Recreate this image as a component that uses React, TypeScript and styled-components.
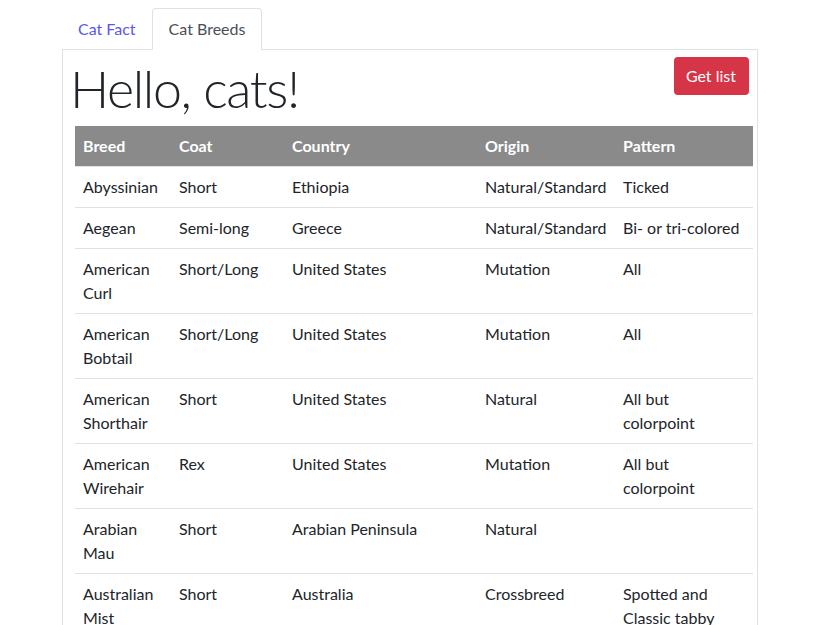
import React from "react";
import styled, { createGlobalStyle } from "styled-components";

const Global = createGlobalStyle`
  html, body { margin: 0; padding: 0; background: #fff; }
  body {
    font-family: "Lato", "Noto Sans", sans-serif;
    font-size: 16px;
    line-height: 24px;
    color: #212529;
  }
`;

const Page = styled.div`
  width: 696px;
  margin: 8px 0 0 62px;
`;

const Tabs = styled.ul`
  display: flex;
  list-style: none;
  margin: 0;
  padding: 0;
  border-bottom: 1px solid #dee2e6;
`;

const Tab = styled.li<{ $active?: boolean }>`
  margin-bottom: -1px;
  padding: 8px 15px;
  height: 24px;
  border: 1px solid ${(p) => (p.$active ? "#dee2e6" : "transparent")};
  border-bottom-color: ${(p) => (p.$active ? "#fff" : "transparent")};
  border-radius: 4px 4px 0 0;
  background: ${(p) => (p.$active ? "#fff" : "transparent")};
  color: ${(p) => (p.$active ? "#495057" : "#5a57ee")};
  cursor: pointer;
  &:last-child { padding: 8px 16px 8px 16px; }
`;

const Panel = styled.div`
  border: 1px solid #dee2e6;
  border-top: none;
  padding: 0 8px 0 12px;
`;

const HeadRow = styled.div`
  display: flex;
  justify-content: space-between;
  align-items: flex-start;
  height: 76px;
`;

const Title = styled.h1`
  margin: 0 0 0 -5px;
  font-family: "Lato", sans-serif;
  font-weight: 300;
  font-size: 52px;
  letter-spacing: -1.4px;
  line-height: 76px;
  color: #212529;
`;

const Button = styled.button`
  margin-top: 7px;
  background: #d63447;
  color: #fff;
  border: none;
  border-radius: 4px;
  font-family: inherit;
  font-size: 16px;
  line-height: 24px;
  padding: 7px 13px 7px 12px;
`;

const Table = styled.table`
  width: 678px;
  border-collapse: collapse;
  table-layout: fixed;
`;

const Th = styled.th`
  background: #8a8a8a;
  color: #fff;
  font-weight: 700;
  text-align: left;
  padding: 8px;
  vertical-align: top;
`;

const Td = styled.td`
  padding: 8px;
  vertical-align: top;
  border-top: 1px solid #dee2e6;
  &:last-child { padding-right: 12px; }
`;

const cols = [
  { name: "Breed", width: 96 },
  { name: "Coat", width: 113 },
  { name: "Country", width: 193 },
  { name: "Origin", width: 138 },
  { name: "Pattern", width: 138 },
];

const rows = [
  ["Abyssinian", "Short", "Ethiopia", "Natural/Standard", "Ticked"],
  ["Aegean", "Semi-long", "Greece", "Natural/Standard", "Bi- or tri-colored"],
  ["American Curl", "Short/Long", "United States", "Mutation", "All"],
  ["American Bobtail", "Short/Long", "United States", "Mutation", "All"],
  ["American Shorthair", "Short", "United States", "Natural", "All but colorpoint"],
  ["American Wirehair", "Rex", "United States", "Mutation", "All but colorpoint"],
  ["Arabian Mau", "Short", "Arabian Peninsula", "Natural", ""],
  ["Australian Mist", "Short", "Australia", "Crossbreed", "Spotted and Classic tabby"],
];

export default function App() {
  return (
    <Page>
      <Global />
      <Tabs>
        <Tab>Cat Fact</Tab>
        <Tab $active>Cat Breeds</Tab>
      </Tabs>
      <Panel>
        <HeadRow>
          <Title>Hello, cats!</Title>
          <Button>Get list</Button>
        </HeadRow>
        <Table>
          <colgroup>
            {cols.map((c) => (
              <col key={c.name} style={{ width: c.width }} />
            ))}
          </colgroup>
          <thead>
            <tr>
              {cols.map((c) => (
                <Th key={c.name}>{c.name}</Th>
              ))}
            </tr>
          </thead>
          <tbody>
            {rows.map((r) => (
              <tr key={r[0]}>
                {r.map((v, i) => (
                  <Td key={i}>{v}</Td>
                ))}
              </tr>
            ))}
          </tbody>
        </Table>
      </Panel>
    </Page>
  );
}
